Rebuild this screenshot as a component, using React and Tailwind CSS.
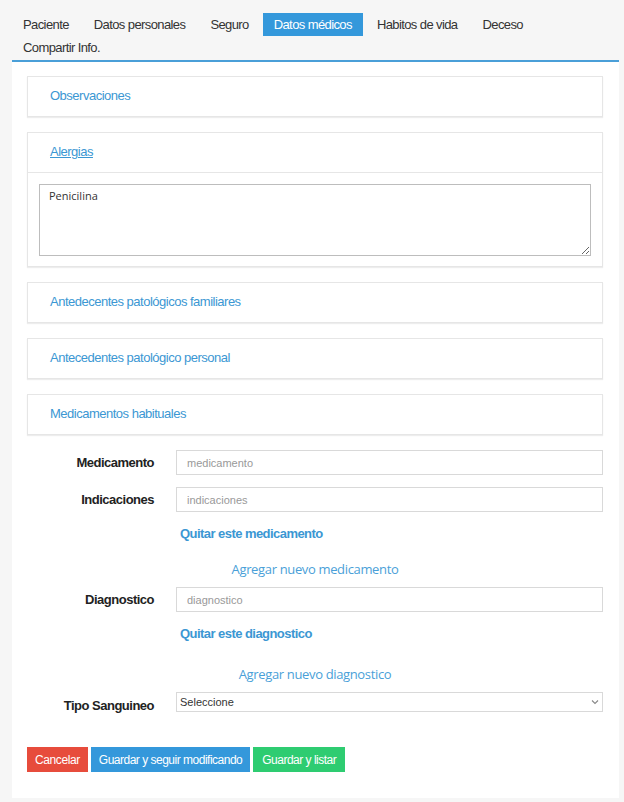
import { useState } from "react";

const tabs = ["Paciente", "Datos personales", "Seguro", "Datos médicos", "Habitos de vida", "Deceso", "Compartir Info."];

function Panel({ title, underline, children }) {
  return (
    <div className="border border-[#e6e6e6] bg-white shadow-[0_1px_1px_rgba(0,0,0,0.07)]">
      <div className="h-[39px] flex items-center px-[22px] pb-[1px]">
        <a className={`text-[13px] tracking-[-0.5px] text-[#3b97d3] ${underline ? "underline" : ""}`}>{title}</a>
      </div>
      {children}
    </div>
  );
}

function Row({ label, placeholder }) {
  return (
    <div className="flex items-center">
      <label className="w-[127px] text-right text-[13px] tracking-[-0.5px] font-bold text-[#222]">{label}</label>
      <input
        placeholder={placeholder}
        className="ml-[22px] flex-1 h-[25px] border border-[#d9d9d9] px-[10px] text-[11px] placeholder:text-[#999] outline-none"
      />
    </div>
  );
}

export default function App() {
  const [active] = useState("Datos médicos");
  const [alergias, setAlergias] = useState("Penicilina");

  return (
    <div className="min-h-[802px] bg-[#f6f6f6] pl-[12px] pr-[5px] pt-[13px] pb-[5px] font-['Liberation_Sans',Arial,sans-serif] text-[#333]">
      <div className="flex flex-wrap gap-x-[3px] border-b-2 border-[#4a9fd8] pb-[1px]">
        {tabs.map((t) => (
          <div
            key={t}
            className={`h-[23px] px-[11px] flex items-center text-[13px] tracking-[-0.6px] ${t === active ? "bg-[#3498db] text-white" : "text-[#333]"}`}
          >
            {t}
          </div>
        ))}
      </div>

      <div className="bg-white pl-[15px] pr-[16px] pt-[14px] pb-[26px] flex flex-col">
        <div className="flex flex-col gap-[15px]">
          <Panel title="Observaciones" />
          <Panel title="Alergias" underline>
            <div className="border-t border-[#e6e6e6] px-[11px] pt-[11px] pb-[10px]">
              <textarea
                value={alergias}
                onChange={(e) => setAlergias(e.target.value)}
                className="block w-full h-[72px] border border-[#bdbdbd] px-[9px] py-[3px] text-[11px] text-[#333] font-['Open_Sans',sans-serif] outline-none"
              />
            </div>
          </Panel>
          <Panel title="Antedecentes patológicos familiares" />
          <Panel title="Antecedentes patológico personal" />
          <Panel title="Medicamentos habituales" />
        </div>

        <div className="mt-[15px] flex flex-col">
          <Row label="Medicamento" placeholder="medicamento" />
          <div className="mt-[12px]">
            <Row label="Indicaciones" placeholder="indicaciones" />
          </div>
          <a className="ml-[153px] mt-[12px] text-[13px] tracking-[-0.55px] font-bold text-[#3b97d3]">Quitar este medicamento</a>
          <a className="mt-[16px] self-center text-[13px] tracking-[-0.35px] text-[#4a9fd8] font-['Open_Sans',sans-serif]">Agregar nuevo medicamento</a>
          <div className="mt-[8px]">
            <Row label="Diagnostico" placeholder="diagnostico" />
          </div>
          <a className="ml-[153px] mt-[12px] text-[13px] tracking-[-0.55px] font-bold text-[#3b97d3]">Quitar este diagnostico</a>
          <a className="mt-[21px] self-center text-[13px] tracking-[-0.35px] text-[#4a9fd8] font-['Open_Sans',sans-serif]">Agregar nuevo diagnostico</a>
          <div className="mt-[8px] flex items-start h-[20px]">
            <label className="w-[127px] pt-[7px] leading-[13px] text-right text-[13px] tracking-[-0.5px] font-bold text-[#222]">Tipo Sanguineo</label>
            <div className="relative ml-[22px] flex-1">
              <select className="block w-full h-[20px] appearance-none border border-[#d9d9d9] pl-[3px] text-[11px] text-[#333] bg-white outline-none">
                <option>Seleccione</option>
              </select>
              <svg className="absolute right-[4px] top-[7px]" width="8" height="6" viewBox="0 0 8 6" fill="none">
                <path d="M1 1.5L4 4.5L7 1.5" stroke="#888" strokeWidth="1.1" />
              </svg>
            </div>
          </div>
        </div>

        <div className="mt-[35px] flex gap-[3px]">
          <button className="h-[25px] px-[8px] bg-[#e74c3c] text-white text-[12px] tracking-[-0.4px]">Cancelar</button>
          <button className="h-[25px] px-[8px] bg-[#3498db] text-white text-[12px] tracking-[-0.5px]">Guardar y seguir modificando</button>
          <button className="h-[25px] px-[9px] bg-[#2ecc71] text-white text-[12px] tracking-[-0.5px]">Guardar y listar</button>
        </div>
      </div>
    </div>
  );
}
